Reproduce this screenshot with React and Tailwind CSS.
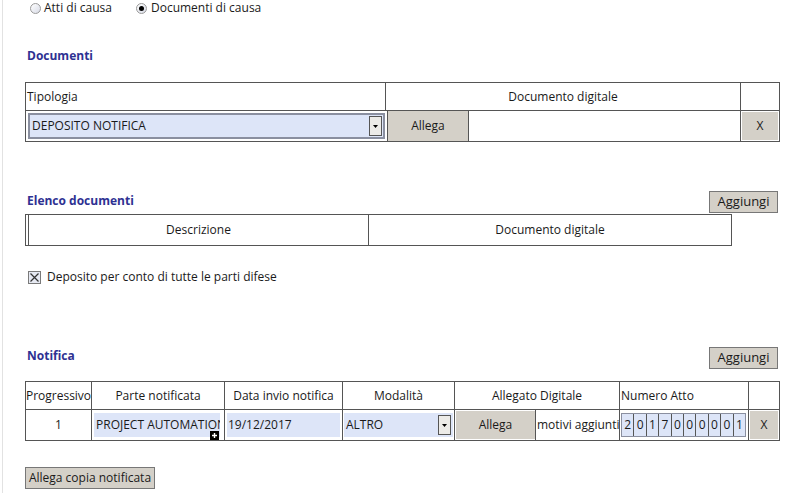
import React from 'react';

const font = { fontFamily: '"Open Sans", "Liberation Sans", sans-serif' };

function Radio({ checked }) {
    return (
        <span className="inline-flex h-[11px] w-[11px] items-center justify-center rounded-full border border-[#9a9a9a] bg-gradient-to-br from-white to-[#d8dbe6]">
            {checked && <span className="h-[5px] w-[5px] rounded-full bg-black" />}
        </span>
    );
}

function SectionTitle({ children }) {
    return <div className="text-[12px] font-bold leading-none text-[#2e3192]">{children}</div>;
}

function GrayButton({ children, className = '' }) {
    return (
        <div className={`flex items-center justify-center bg-[#d4d0c8] text-[12px] ${className}`}>{children}</div>
    );
}

function SelectArrow() {
    return (
        <span className="flex h-[20px] w-[13px] items-center justify-center border border-[#555] bg-[#ecebe8]">
            <svg width="5" height="3" viewBox="0 0 5 3">
                <path d="M0 0h5L2.5 3z" fill="#000" />
            </svg>
        </span>
    );
}

export default function App() {
    const digits = ['2', '0', '1', '7', '0', '0', '0', '0', '0', '1'];

    return (
        <div style={font} className="ml-[2px] min-h-[493px] border-l border-[#e2e2e2] bg-white pl-[22px] text-[#1a1a1a]">
            {/* tipo atti */}
            <div className="flex h-[16px] items-center text-[12px]">
                <span className="ml-[5px] flex items-center gap-[3px]">
                    <Radio />
                    Atti di causa
                </span>
                <span className="ml-[24px] flex items-center gap-[4px]">
                    <Radio checked />
                    Documenti di causa
                </span>
            </div>

            <div className="mt-[34px] pl-[2px]">
                <SectionTitle>Documenti</SectionTitle>
            </div>

            {/* tabella documenti */}
            <div className="mt-[20px] w-[755px] border border-[#555] text-[12px]">
                <div className="flex h-[28px] border-b border-[#555]">
                    <div className="flex w-[360px] items-center border-r border-[#555] pl-[1px]">Tipologia</div>
                    <div className="flex w-[355px] items-center justify-center border-r border-[#555]">Documento digitale</div>
                    <div className="flex-1" />
                </div>
                <div className="flex h-[30px]">
                    <div className="flex w-[361px] items-center px-[2px]">
                        <div className="flex h-[26px] w-full items-center justify-between border-2 border-[#8a8fa0] bg-[#dde5f8] pl-[2px] pr-[1px]">
                            <span>DEPOSITO NOTIFICA</span>
                            <SelectArrow />
                        </div>
                    </div>
                    <div className="flex w-[354px] border-x border-[#555]">
                        <GrayButton className="w-[80px]">Allega</GrayButton>
                        <div className="flex-1 border-l border-[#555] bg-white" />
                    </div>
                    <GrayButton className="m-[1px] flex-1">X</GrayButton>
                </div>
            </div>

            {/* elenco documenti */}
            <div className="mt-[49px] flex w-[755px] items-end justify-between">
                <div className="pb-[6px] pl-[2px]">
                    <SectionTitle>Elenco documenti</SectionTitle>
                </div>
                <GrayButton className="mr-[2px] h-[22px] w-[69px] border border-[#777] text-[13px]">Aggiungi</GrayButton>
            </div>
            <div className="mt-[1px] w-[707px] border border-[#555] pl-[2px] text-[12px]">
                <div className="flex h-[30px] border-l border-[#555]">
                    <div className="flex w-[340px] items-center justify-center border-r border-[#555]">Descrizione</div>
                    <div className="flex flex-1 items-center justify-center">Documento digitale</div>
                </div>
            </div>

            {/* checkbox */}
            <div className="mt-[22px] flex items-center gap-[6px] pl-[3px] text-[12px]">
                <span className="flex h-[13px] w-[13px] items-center justify-center border border-[#7a7a7a] bg-[#e6e9f2]">
                    <svg width="11" height="11" viewBox="0 0 11 11">
                        <path d="M1.5 1.5l8 8M9.5 1.5l-8 8" stroke="#333" strokeWidth="1.2" />
                    </svg>
                </span>
                Deposito per conto di tutte le parti difese
            </div>

            {/* notifica */}
            <div className="mt-[61px] flex w-[755px] items-end justify-between">
                <div className="pb-[7px] pl-[2px]">
                    <SectionTitle>Notifica</SectionTitle>
                </div>
                <GrayButton className="mr-[2px] h-[22px] w-[69px] border border-[#777] text-[13px]">Aggiungi</GrayButton>
            </div>

            <div className="mt-[12px] w-[755px] border border-[#555] text-[12px]">
                <div className="flex h-[28px] border-b border-[#555]">
                    <div className="flex w-[66px] items-center justify-center border-r border-[#555]">Progressivo</div>
                    <div className="flex w-[133px] items-center justify-center border-r border-[#555]">Parte notificata</div>
                    <div className="flex w-[118px] items-center justify-center border-r border-[#555]">Data invio notifica</div>
                    <div className="flex w-[112px] items-center justify-center border-r border-[#555]">Modalità</div>
                    <div className="flex w-[165px] items-center justify-center border-r border-[#555]">Allegato Digitale</div>
                    <div className="flex w-[129px] items-center border-r border-[#555] pl-[1px]">Numero Atto</div>
                    <div className="flex-1" />
                </div>
                <div className="flex h-[30px]">
                    <div className="flex w-[66px] items-center justify-center border-r border-[#555]">1</div>
                    <div className="relative flex w-[133px] items-center border-r border-[#555] pl-[2px] pr-[4px]">
                        <div className="flex h-[24px] w-full items-center overflow-hidden whitespace-nowrap bg-[#dde5f8] pl-[2px]">
                            PROJECT AUTOMATION
                        </div>
                        <span className="absolute bottom-[0px] right-[5px] flex h-[9px] w-[9px] items-center justify-center bg-black">
                            <svg width="7" height="7" viewBox="0 0 7 7">
                                <path d="M3.5 1v5M1 3.5h5" stroke="#fff" strokeWidth="1.4" />
                            </svg>
                        </span>
                    </div>
                    <div className="flex w-[118px] items-center border-r border-[#555] px-[2px]">
                        <div className="flex h-[24px] w-full items-center bg-[#dde5f8] pl-[1px]">19/12/2017</div>
                    </div>
                    <div className="flex w-[112px] items-center border-r border-[#555] px-[1px]">
                        <div className="flex h-[24px] w-full items-center justify-between bg-[#dde5f8] pl-[2px] pr-[2px]">
                            <span>ALTRO</span>
                            <SelectArrow />
                        </div>
                    </div>
                    <div className="flex w-[165px] border-r border-[#555]">
                        <GrayButton className="my-[1px] ml-[1px] w-[79px]">Allega</GrayButton>
                        <div className="flex flex-1 items-center overflow-hidden whitespace-nowrap border-l border-[#555] pl-[1px]">
                            motivi aggiunti
                        </div>
                    </div>
                    <div className="flex w-[129px] items-center border-r border-[#555] px-[1px]">
                        <div className="flex h-[24px] w-[125px] border border-[#8a8fa0] bg-[#dde5f8]">
                            {digits.map((d, i) => (
                                <span
                                    key={i}
                                    className={`flex flex-1 items-center justify-center ${i < digits.length - 1 ? 'border-r border-[#555]' : ''}`}
                                >
                                    {d}
                                </span>
                            ))}
                        </div>
                    </div>
                    <GrayButton className="m-[1px] flex-1">X</GrayButton>
                </div>
            </div>

            <GrayButton className="mt-[26px] h-[22px] w-[130px] border border-[#777]">Allega copia notificata</GrayButton>
        </div>
    );
}
